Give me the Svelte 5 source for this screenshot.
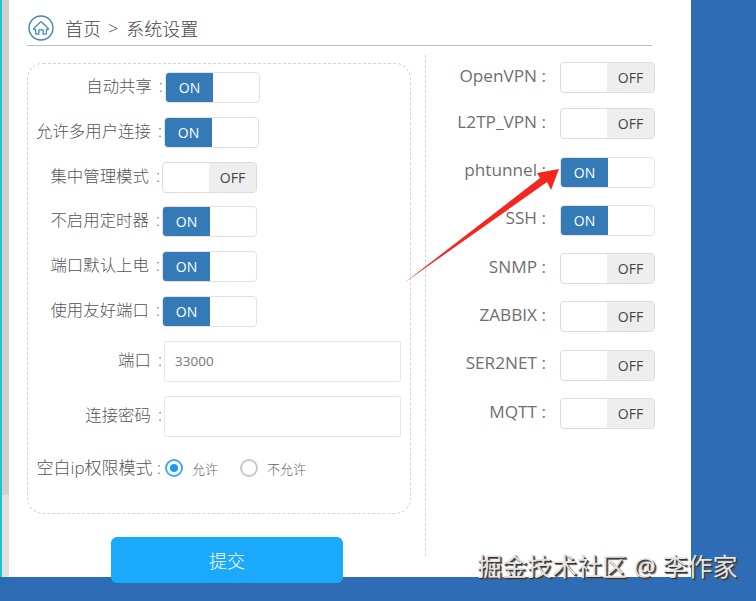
<script lang="ts">
	const leftSwitches = [
		{ label: '自动共享', on: true, cls: 'a' },
		{ label: '允许多用户连接', on: true, cls: 'b' },
		{ label: '集中管理模式', on: false, cls: 'c' },
		{ label: '不启用定时器', on: true, cls: 'c' },
		{ label: '端口默认上电', on: true, cls: 'c' },
		{ label: '使用友好端口', on: true, cls: 'c' }
	];

	const rightSwitches = [
		{ label: 'OpenVPN', on: false },
		{ label: 'L2TP_VPN', on: false },
		{ label: 'phtunnel', on: true },
		{ label: 'SSH', on: true },
		{ label: 'SNMP', on: false },
		{ label: 'ZABBIX', on: false },
		{ label: 'SER2NET', on: false },
		{ label: 'MQTT', on: false }
	];
</script>

{#snippet toggle(on: boolean)}
	<div class="switch" class:on>
		{#if on}
			<span class="knob on-part">ON</span>
			<span class="blank"></span>
		{:else}
			<span class="blank"></span>
			<span class="knob off-part">OFF</span>
		{/if}
	</div>
{/snippet}

<div class="page">
	<div class="rail"></div>
	<main class="panel">
		<header class="crumbs">
			<svg class="home" viewBox="0 0 26 26" width="26" height="26" fill="none" stroke="#3d86b8">
				<circle cx="13" cy="13" r="12" stroke-width="1.4" />
				<path
					d="M5.8 13.4 12.2 7.2c.5-.4 1.1-.4 1.6 0l6.4 6.2c.5.6-.1 1.3-.8 1H18.4v3.8c0 .6-.4 1-1 1h-2.2v-3.6c0-.5-.3-.8-.8-.8h-2.8c-.5 0-.8.3-.8.8v3.6H8.6c-.6 0-1-.4-1-1v-3.8H6.6c-.7.3-1.3-.4-.8-1z"
					stroke-width="1.3"
					stroke-linejoin="round"
				/>
			</svg>
			<span>首页</span>
			<span class="sep">&gt;</span>
			<span>系统设置</span>
		</header>

		<div class="columns">
			<section class="card">
				{#each leftSwitches as row}
					<div class="row {row.cls}">
						<span class="label">{row.label} :</span>
						{@render toggle(row.on)}
					</div>
				{/each}

				<div class="row field first-field">
					<span class="label">端口 :</span>
					<div class="input">33000</div>
				</div>
				<div class="row field">
					<span class="label">连接密码 :</span>
					<div class="input"></div>
				</div>

				<div class="row radios">
					<span class="label">空白ip权限模式 :</span>
					<span class="radio checked"></span>
					<span class="radio-text first">允许</span>
					<span class="radio"></span>
					<span class="radio-text">不允许</span>
				</div>
			</section>

			<section class="services">
				{#each rightSwitches as row}
					<div class="service">
						<span class="label">{row.label} :</span>
						{@render toggle(row.on)}
					</div>
				{/each}
			</section>
		</div>

		<button class="submit">提交</button>
	</main>

	<svg class="arrow" width="756" height="601" viewBox="0 0 756 601">
		<polygon points="404,283 540,178 537,173 559,169 551,190 547,182" fill="#f5261c" />
	</svg>
	<div class="watermark">掘金技术社区 @ 李作家</div>
</div>

<style>
	:global(body) {
		margin: 0;
	}

	.page {
		position: relative;
		display: flex;
		align-items: flex-start;
		width: 756px;
		height: 601px;
		overflow: hidden;
		background: #2e6db5;
		font-family: 'Open Sans', 'Noto Sans CJK SC', sans-serif;
		color: #666;
	}

	.rail {
		box-sizing: border-box;
		width: 9px;
		height: 577px;
		border-left: 2px solid #1fc3d8;
		background: linear-gradient(#cfcfcf 495px, #e2e0e1 495px);
	}

	.panel {
		box-sizing: border-box;
		width: 682px;
		height: 577px;
		padding: 13px 39px 0 18px;
		background: #fff;
	}

	.crumbs {
		display: flex;
		align-items: center;
		height: 30px;
		padding: 0 0 2px 1px;
		border-bottom: 1px solid #bdbdbd;
		font-size: 18px;
		font-weight: 300;
		color: #444;
	}

	.home {
		margin-right: 11px;
	}

	.sep {
		margin: 0 8px 0 7px;
	}

	.columns {
		display: flex;
		margin-top: 9px;
	}

	.card {
		flex: none;
		box-sizing: border-box;
		width: 384px;
		height: 451px;
		margin-top: 8px;
		padding-top: 8px;
		border: 1px dashed #d4d4d4;
		border-radius: 16px;
	}

	.row {
		display: flex;
		align-items: center;
		height: 31px;
		margin-bottom: 13.75px;
	}

	.label {
		padding-bottom: 5px;
		font-size: 16.4px;
		font-weight: 300;
		color: #555;
		white-space: nowrap;
		text-align: right;
		word-spacing: 3px;
	}

	.row .label {
		box-sizing: border-box;
		flex: none;
		padding-right: 2px;
	}

	.row.a .label {
		width: 137px;
	}

	.row.b .label {
		width: 136px;
	}

	.row.c .label {
		width: 134px;
	}

	.switch {
		display: flex;
		flex: none;
		box-sizing: border-box;
		width: 95px;
		height: 31px;
		border: 1px solid #dcdcdc;
		border-radius: 4px;
		overflow: hidden;
		background: #fff;
		font-size: 14px;
	}

	.knob {
		display: flex;
		align-items: center;
		justify-content: center;
		width: 47px;
	}

	.blank {
		flex: 1;
	}

	.on-part {
		background: #337ab7;
		color: #fff;
	}

	.off-part {
		background: #eee;
		color: #444;
	}

	.switch.on {
		border-color: #e2e2e2;
	}

	.field {
		height: 41px;
		margin-bottom: 14px;
	}

	.first-field {
		margin-top: 13px;
	}

	.field .label {
		width: 136px;
	}

	.input {
		box-sizing: border-box;
		width: 237px;
		height: 41px;
		padding-left: 10px;
		border: 1px solid #e6e6e6;
		border-radius: 2px;
		font-size: 13.5px;
		line-height: 39px;
		color: #777;
	}

	.radios {
		height: 31px;
		padding-top: 2px;
	}

	.radios .label {
		width: 135px;
		margin-right: 2px;
		padding-bottom: 4px;
		font-size: 17px;
		word-spacing: 0;
	}

	.radio {
		box-sizing: border-box;
		position: relative;
		flex: none;
		width: 18px;
		height: 18px;
		border: 2px solid #c9c9c9;
		border-radius: 50%;
	}

	.radio.checked {
		border-color: #3fa9f5;
	}

	.radio.checked::after {
		content: '';
		position: absolute;
		inset: 3px;
		border-radius: 50%;
		background: #1e9bf0;
	}

	.radio-text {
		margin-left: 9px;
		font-size: 13px;
		font-weight: 300;
		color: #666;
	}

	.radio-text.first {
		margin-right: 22px;
	}

	.services {
		flex: none;
		box-sizing: border-box;
		width: 230px;
		height: 501px;
		margin-left: 14px;
		padding-top: 7px;
		border-left: 1px dashed #d4d4d4;
	}

	.service {
		display: flex;
		align-items: center;
		justify-content: flex-end;
		gap: 14px;
		height: 31px;
		margin-bottom: 17.3px;
	}

	.service:first-child {
		margin-bottom: 15.3px;
	}

	.service .label {
		font-size: 17.2px;
		font-weight: 400;
		color: #6f6f6f;
		word-spacing: 0;
	}

	.submit {
		display: block;
		position: relative;
		width: 232px;
		height: 46px;
		margin: -19px 0 0 84px;
		border: none;
		border-radius: 6px;
		background: #1aa9fb;
		font-family: inherit;
		font-size: 18px;
		font-weight: 300;
		color: #fff;
	}

	.arrow {
		position: absolute;
		inset: 0;
		pointer-events: none;
	}

	.watermark {
		position: absolute;
		left: 477px;
		top: 549px;
		font-size: 25px;
		line-height: 34px;
		color: #e4e4e4;
		white-space: nowrap;
		text-shadow:
			1px 1px 0 #333,
			2px 2px 1px #555;
	}
</style>
